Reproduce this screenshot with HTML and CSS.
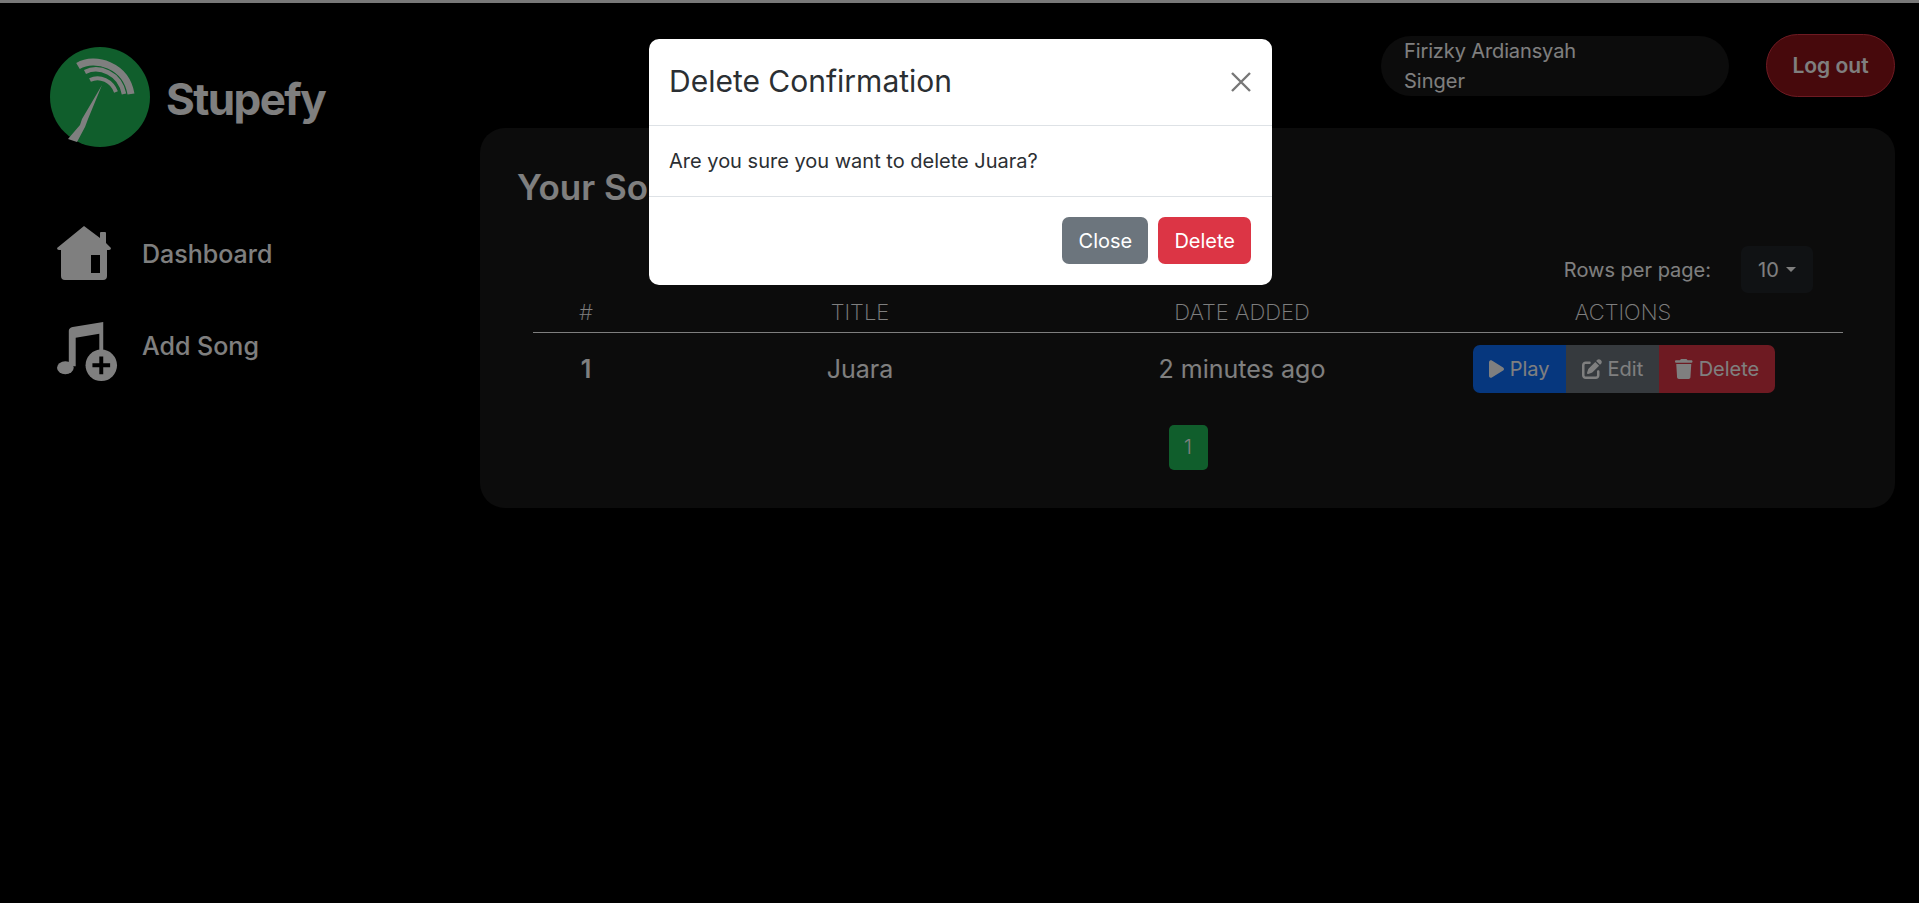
FILE: index.html
```html
<!DOCTYPE html>
<html lang="en">
<head>
    <meta charset="UTF-8">
    <meta name="viewport" content="width=device-width, initial-scale=1.0">
    <title>Your Songs</title>
    <link rel="stylesheet" href="styles.css">
</head>
<body>
    <div class="top-line"></div>

    <div class="page">
        <aside class="sidebar">
            <div class="brand">
                <svg class="brand-logo" viewBox="0 0 100 100">
                    <circle cx="50" cy="50" r="50" fill="#20bc58"/>
                    <g fill="none" stroke="#fff">
                        <path d="M28 19C45 9 76 18 81 47" stroke-width="7"/>
                        <path d="M35 25C49 18 70 26 74 47" stroke-width="4.5"/>
                        <path d="M40 33C50 28 62 34 66 45" stroke-width="4"/>
                    </g>
                    <polygon points="52,38 32,72 30,78 18,92 27,95 35,80 38,72" fill="#fff"/>
                </svg>
                <span class="brand-name">Stupefy</span>
            </div>

            <nav class="side-nav">
                <a class="side-link" href="#">
                    <svg class="side-icon" viewBox="0 0 54 54">
                        <path fill-rule="evenodd" fill="#fff" d="M27 0L43 12V7Q43 6 44 6H48Q49 6 49 7V17L54 22Q54 24 52 24H50V50Q50 54 46 54H8Q4 54 4 50V24H2Q0 24 0 22ZM34 29V47H43V29Z"/>
                    </svg>
                    <span class="side-label">Dashboard</span>
                </a>
                <a class="side-link side-link-song" href="#">
                    <svg class="side-icon side-icon-song" viewBox="0 0 62 62">
                        <path fill="#fff" d="M12 46V10Q12 7 16 6L47 1V34H43V13L19 17V46Z"/>
                        <ellipse cx="8.5" cy="47.5" rx="8.5" ry="6.5" fill="#fff"/>
                        <circle cx="45" cy="45" r="16" fill="#fff"/>
                        <path fill="#000" d="M43 36H47V43H54V47H47V54H43V47H36V43H43Z"/>
                    </svg>
                    <span>Add Song</span>
                </a>
            </nav>
        </aside>

        <main class="content">
            <header class="user-bar">
                <div class="user-pill">
                    <div class="user-name">Firizky Ardiansyah</div>
                    <div>Singer</div>
                </div>
                <button class="logout-btn">Log out</button>
            </header>

            <section class="panel">
                <h2 class="panel-title">Your Songs</h2>

                <div class="rows-bar">
                    <span>Rows per page:</span>
                    <button class="rows-select">10<i class="caret"></i></button>
                </div>

                <table class="song-table">
                    <thead>
                        <tr>
                            <th class="col-num">#</th>
                            <th class="col-title">TITLE</th>
                            <th class="col-date">DATE ADDED</th>
                            <th class="col-actions">ACTIONS</th>
                        </tr>
                    </thead>
                    <tbody>
                        <tr>
                            <td class="song-num">1</td>
                            <td>Juara</td>
                            <td>2 minutes ago</td>
                            <td class="song-actions">
                                <div class="btn-group">
                                    <button class="action-btn action-play">
                                        <svg viewBox="0 0 384 512"><path d="M73 39c-14.8-9.1-33.4-9.4-48.5-.9S0 62.6 0 80V432c0 17.4 9.4 33.4 24.5 41.9s33.7 8.1 48.5-.9L361 297c14.3-8.7 23-24.2 23-41s-8.7-32.2-23-41L73 39z"/></svg>
                                        Play
                                    </button>
                                    <button class="action-btn action-edit">
                                        <svg viewBox="0 0 512 512"><path d="M471.6 21.7c-21.9-21.9-57.3-21.9-79.2 0L362.3 51.7l97.9 97.9 30.1-30.1c21.9-21.9 21.9-57.3 0-79.2L471.6 21.7zm-299.2 220c-6.1 6.1-10.8 13.6-13.5 21.9l-29.6 88.8c-2.9 8.6-.6 18.1 5.8 24.6s15.9 8.7 24.6 5.8l88.8-29.6c8.2-2.7 15.7-7.4 21.9-13.5L437.7 172.3 339.7 74.3 172.4 241.7zM96 64C43 64 0 107 0 160V416c0 53 43 96 96 96H352c53 0 96-43 96-96V320c0-17.7-14.3-32-32-32s-32 14.3-32 32v96c0 17.7-14.3 32-32 32H96c-17.7 0-32-14.3-32-32V160c0-17.7 14.3-32 32-32h96c17.7 0 32-14.3 32-32s-14.3-32-32-32H96z"/></svg>
                                        Edit
                                    </button>
                                    <button class="action-btn action-delete">
                                        <svg viewBox="0 0 448 512"><path d="M135.2 17.7L128 32H32C14.3 32 0 46.3 0 64S14.3 96 32 96H416c17.7 0 32-14.3 32-32s-14.3-32-32-32H320l-7.2-14.3C307.4 6.8 296.3 0 284.2 0H163.8c-12.1 0-23.2 6.8-28.6 17.7zM416 128H32L53.2 467c1.6 25.3 22.6 45 47.9 45H346.9c25.3 0 46.3-19.7 47.9-45L416 128z"/></svg>
                                        Delete
                                    </button>
                                </div>
                            </td>
                        </tr>
                    </tbody>
                </table>

                <div class="pager">
                    <span class="pager-item">1</span>
                </div>
            </section>
        </main>
    </div>

    <div class="backdrop">
        <div class="modal">
            <div class="modal-header">
                <h5>Delete Confirmation</h5>
                <svg class="modal-close" viewBox="0 0 20 20">
                    <path d="M1 1L19 19M19 1L1 19" stroke="#777" stroke-width="2.4" fill="none"/>
                </svg>
            </div>
            <div class="modal-body">Are you sure you want to delete Juara?</div>
            <div class="modal-footer">
                <button class="modal-btn modal-btn-close">Close</button>
                <button class="modal-btn modal-btn-delete">Delete</button>
            </div>
        </div>
    </div>
</body>
</html>
```

FILE: styles.css
```css
* {
    box-sizing: border-box;
}

body {
    font-family: Inter, "Liberation Sans", sans-serif;
    font-size: 20px;
    line-height: 30px;
    background-color: #000;
    color: #fff;
    margin: 0;
    height: 903px;
    overflow: hidden;
}

button {
    font-family: inherit;
    font-size: 20px;
    line-height: 30px;
    border: none;
    color: #fff;
}

.top-line {
    height: 3px;
    background-color: #f0f0f0;
}

.page {
    display: flex;
}

/* sidebar */
.sidebar {
    width: 480px;
    flex-shrink: 0;
    padding: 44px 0 0 50px;
}

.brand {
    display: flex;
    align-items: center;
    gap: 16px;
}

.brand-logo {
    width: 100px;
    height: 100px;
}

.brand-name {
    font-size: 44px;
    font-weight: 700;
    letter-spacing: -1.6px;
    line-height: 60px;
    padding-top: 3px;
}

.side-nav {
    display: flex;
    flex-direction: column;
    margin-top: 79px;
    padding-left: 7px;
}

.side-link {
    display: flex;
    align-items: center;
    gap: 31px;
    height: 54px;
    color: #fff;
    text-decoration: none;
    font-size: 25px;
    font-weight: 500;
}

.side-label {
    padding-top: 2px;
}

.side-link-song {
    margin-top: 41px;
    gap: 24px;
    align-items: flex-start;
    line-height: 50px;
}

.side-icon {
    width: 54px;
    height: 54px;
}

.side-icon-song {
    width: 61px;
    height: 61px;
}

/* main */
.content {
    flex: 1;
    padding: 31px 24px 0 0;
}

.user-bar {
    display: flex;
    justify-content: flex-end;
    align-items: center;
    gap: 37px;
    height: 63px;
}

.user-pill {
    width: 348px;
    height: 60px;
    padding-left: 23px;
    background-color: #181818;
    border-radius: 30px;
    color: #fff;
}

.user-name {
    letter-spacing: -0.12px;
}

.logout-btn {
    width: 129px;
    height: 63px;
    padding-top: 2px;
    background-color: #8e1218;
    border: 1px solid #dc3545;
    border-radius: 32px;
    font-weight: 600;
    font-size: 21px;
}

.panel {
    margin-top: 31px;
    height: 380px;
    padding: 36px 52px 0 53px;
    background-color: #181818;
    border-radius: 25px;
}

.panel-title {
    font-size: 35px;
    font-weight: 600;
    line-height: 46px;
    margin: 0 0 0 -16px;
}

.rows-bar {
    display: flex;
    justify-content: flex-end;
    align-items: center;
    gap: 30px;
    margin-top: 36px;
    padding-right: 30px;
}

.rows-select {
    width: 72px;
    height: 47px;
    padding: 0;
    background-color: #212529;
    border-radius: 7px;
}

.caret {
    display: inline-block;
    margin-left: 7px;
    vertical-align: 5px;
    border-top: 5px solid #fff;
    border-left: 5px solid transparent;
    border-right: 5px solid transparent;
}

.song-table {
    width: 100%;
    border-collapse: collapse;
    table-layout: fixed;
    text-align: center;
}

.song-table th {
    height: 39px;
    padding: 0 0 1px;
    font-size: 22px;
    font-weight: 200;
    border-bottom: 1px solid #fff;
}

.song-table td {
    padding: 12px 0;
    font-size: 25px;
    font-weight: 400;
}

.song-table .song-num {
    font-weight: 600;
}

.song-table .song-actions {
    padding-left: 2px;
}

.col-num {
    width: 106px;
}

.col-title {
    width: 442px;
}

.col-date {
    width: 322px;
}

.btn-group {
    display: inline-flex;
    vertical-align: middle;
}

.action-btn {
    display: flex;
    align-items: center;
    gap: 6px;
    height: 48px;
    padding: 0 16px;
}

.action-btn svg {
    height: 20px;
    fill: #fff;
}

.action-play {
    background-color: #0d6efd;
    border-radius: 7px 0 0 7px;
}

.action-edit {
    background-color: #6c757d;
}

.action-delete {
    background-color: #dc3545;
    border-radius: 0 7px 7px 0;
}

.pager {
    display: flex;
    justify-content: center;
    margin-top: 20px;
}

.pager-item {
    width: 39px;
    height: 45px;
    line-height: 45px;
    text-align: center;
    background-color: #20bc58;
    border-radius: 5px;
    font-weight: 300;
}

/* delete dialog */
.backdrop {
    position: fixed;
    top: 0;
    left: 0;
    width: 100%;
    height: 100%;
    display: flex;
    justify-content: center;
    align-items: flex-start;
    padding: 39px 0 0 2px;
    background-color: rgba(0, 0, 0, 0.5);
}

.modal {
    width: 623px;
    height: 246px;
    background-color: #fff;
    border-radius: 10px;
    color: #2b2f33;
}

.modal-header {
    display: flex;
    justify-content: space-between;
    align-items: center;
    height: 87px;
    padding: 0 21px 2px 20px;
    border-bottom: 1px solid #dee2e6;
}

.modal-header h5 {
    margin: 0;
    font-size: 30px;
    line-height: 45px;
    font-weight: 400;
}

.modal-close {
    width: 20px;
    height: 20px;
    margin-top: 2px;
}

.modal-body {
    height: 71px;
    padding: 20px;
    border-bottom: 1px solid #dee2e6;
}

.modal-footer {
    display: flex;
    justify-content: flex-end;
    gap: 10px;
    padding: 20px 21px 0 0;
}

.modal-btn {
    height: 47px;
    min-width: 86px;
    padding: 0 16px;
    border-radius: 7px;
}

.modal-btn-close {
    background-color: #6c757d;
}

.modal-btn-delete {
    background-color: #dc3545;
}
```
